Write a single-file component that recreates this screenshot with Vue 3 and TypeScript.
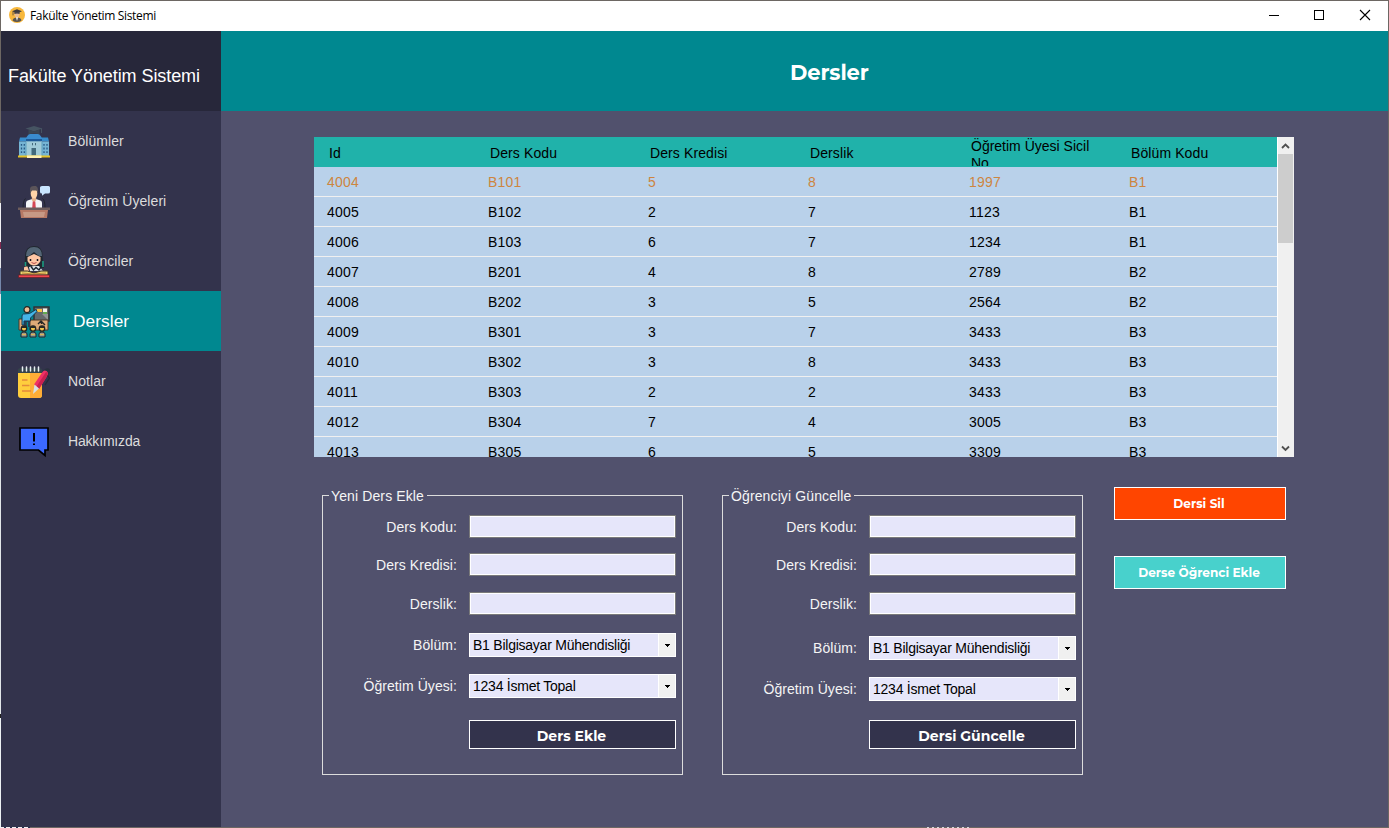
<script setup lang="ts">
import { ref } from 'vue'

interface NavItem { id: string; label: string }
interface Field { label: string; kind: 'text' | 'select'; value: string }
interface FormGroup { id: string; title: string; action: string; fields: Field[] }

const navItems: NavItem[] = [
  { id: 'departments', label: 'Bölümler' },
  { id: 'teachers', label: 'Öğretim Üyeleri' },
  { id: 'students', label: 'Öğrenciler' },
  { id: 'courses', label: 'Dersler' },
  { id: 'grades', label: 'Notlar' },
  { id: 'about', label: 'Hakkımızda' },
]
const current = ref('courses')
const selected = ref(0)

const columns: string[] = ['Id', 'Ders Kodu', 'Ders Kredisi', 'Derslik', 'Öğretim Üyesi Sicil No', 'Bölüm Kodu']
const rows: string[][] = [
  ['4004', 'B101', '5', '8', '1997', 'B1'],
  ['4005', 'B102', '2', '7', '1123', 'B1'],
  ['4006', 'B103', '6', '7', '1234', 'B1'],
  ['4007', 'B201', '4', '8', '2789', 'B2'],
  ['4008', 'B202', '3', '5', '2564', 'B2'],
  ['4009', 'B301', '3', '7', '3433', 'B3'],
  ['4010', 'B302', '3', '8', '3433', 'B3'],
  ['4011', 'B303', '2', '2', '3433', 'B3'],
  ['4012', 'B304', '7', '4', '3005', 'B3'],
  ['4013', 'B305', '6', '5', '3309', 'B3'],
]

const makeFields = (): Field[] => [
  { label: 'Ders Kodu:', kind: 'text', value: '' },
  { label: 'Ders Kredisi:', kind: 'text', value: '' },
  { label: 'Derslik:', kind: 'text', value: '' },
  { label: 'Bölüm:', kind: 'select', value: 'B1 Bilgisayar Mühendisliği' },
  { label: 'Öğretim Üyesi:', kind: 'select', value: '1234 İsmet Topal' },
]
const groups = ref<FormGroup[]>([
  { id: 'add', title: 'Yeni Ders Ekle', action: 'Ders Ekle', fields: makeFields() },
  { id: 'update', title: 'Öğrenciyi Güncelle', action: 'Dersi Güncelle', fields: makeFields() },
])
</script>

<template>
  <div class="window">
    <header class="titlebar">
      <svg class="app-icon" viewBox="0 0 16 16">
        <circle cx="8" cy="8" r="8" fill="#f8b83c" />
        <path d="M3.5 13.5Q4 10.5 8 10.5T12.5 13.5Q10.5 15 8 15T3.5 13.5Z" fill="#5a5550" />
        <path d="M6.8 10H9.2L8 14Z" fill="#f3f0ec" />
        <ellipse cx="8" cy="7.6" rx="2.4" ry="3" fill="#e9bd94" />
        <path d="M3 4.3L8 2.3L13 4.3L8 6.2Z" fill="#3d3b3e" />
        <path d="M5.4 5H10.6V7Q8 5.8 5.4 7Z" fill="#47434a" />
        <path d="M4 4.7V8.4" stroke="#47434a" stroke-width=".8" />
      </svg>
      <span class="app-name">Fakülte Yönetim Sistemi</span>
      <svg class="controls" viewBox="0 0 138 30" shape-rendering="crispEdges">
        <path d="M19 14.5H29" stroke="#000" />
        <rect x="64.500" y="9.500" width="9" height="9" fill="none" stroke="#000" />
        <path d="M110 9L120 19M120 9L110 19" stroke="#000" stroke-width="1.100" shape-rendering="auto" />
      </svg>
    </header>

    <div class="body">
      <aside class="sidebar">
        <div class="brand"><span>Fakülte Yönetim Sistemi</span></div>
        <nav>
          <a v-for="item in navItems" :key="item.id" class="nav-item" :class="[item.id, { active: item.id === current }]" @click="current = item.id">
            <svg v-if="item.id === 'departments'" class="icon" viewBox="0 0 32 32">
              <path d="M2 11.500H8V13H24V11.500H30L31 15.500H1Z" fill="#368bcb" />
              <path d="M11 8H21L25 13H7Z" fill="#3a8cce" />
              <path d="M7.500 2.400L16 0L24.500 2.400L16 5.500Z" fill="#465462" />
              <path d="M10.500 3.500L16 5.500L21.500 3.500V8.500Q16 6.500 10.500 8.500Z" fill="#3a4653" />
              <path d="M23.500 2.500V7" stroke="#465462" />
              <path d="M8 13H24V15.500H8Z" fill="#1d5997" />
              <rect x="1" y="15.500" width="30" height="14.500" fill="#76b5d4" />
              <path d="M8 15.500H24V30H8Z" fill="#a0cbd8" />
              <path d="M8 16V30M24 16V30" stroke="#5c9fbd" />
              <path d="M3.500 18V27M6.300 18V27M26 18V27M29 18V27" stroke="#285a85" stroke-width="1.300" stroke-dasharray="1.800 1.800" />
              <rect x="13.500" y="22" width="4.500" height="7.500" fill="#426a7c" />
              <path d="M14.500 17V19.300M17.500 17V19.300" stroke="#426a7c" />
              <rect y="29.500" width="32" height="2" fill="#e5c326" />
              <rect x="9" y="29.500" width="14.500" height="2.500" fill="#fff0b0" />
            </svg>
            <svg v-else-if="item.id === 'teachers'" class="icon" viewBox="0 0 32 32">
              <path d="M8 23V17Q8 14.500 11 14L16 12.500L21 14Q24 14.500 24 17V23Z" fill="#f3f5f7" />
              <path d="M13.800 10H18.200V14L16 17L13.800 14Z" fill="#e6b18a" />
              <path d="M14.700 15.500H17.300L17.800 22H14.200Z" fill="#d54755" />
              <ellipse cx="16" cy="7.500" rx="3.300" ry="5" fill="#ffd3a8" />
              <path d="M12 7.500V3Q12 0 16 0H18Q20 1 20 4V7.500L18.800 4.500H14Z" fill="#5b5459" />
              <path d="M22 1.500Q22 0 24 0H30.500Q32 0 32 1.500V6Q32 7.500 30 7.500H27L24 9.700V7.500Q22 7.500 22 6Z" fill="#c9e5ff" />
              <path d="M7.500 12.500Q5 15 5 22M24.500 12.500Q27 14 27 22" fill="none" stroke="#20242e" />
              <rect y="21.500" width="32" height="2.500" fill="#6d5d5c" />
              <path d="M2 24H30L29 32H3Z" fill="#b67965" />
              <path d="M5 26H27L26 31H6Z" fill="#c69985" />
            </svg>
            <svg v-else-if="item.id === 'students'" class="icon" viewBox="0 0 32 32">
              <path d="M7 11Q7 0 16 0T24.500 11L26 22H6.500Z" fill="#20272f" />
              <path d="M8 10Q8 1 16 1T24 10L21 10L16 6L11 10Z" fill="#536575" />
              <path d="M9.500 11L16 8L22.500 11V15Q20 19.500 16 19.500T9.500 15Z" fill="#ffc7a4" />
              <path d="M12.500 13V15M19.500 13V15" stroke="#171820" stroke-width="1.500" />
              <path d="M13.500 16.500Q16 18.500 18.500 16.500" stroke="#b64f4d" fill="none" />
              <path d="M7.500 16V20M25 15V21" stroke="#1c9c82" stroke-width="1.600" />
              <path d="M6 25V21.500Q7 20 9.500 20.500L11 25Z" fill="#ffc6a0" />
              <path d="M11 21L16 20L21 20L25 25H12Z" fill="#dfe6ec" />
              <path d="M13 20.500L15.500 24L18 21.500L21 24L23 21" fill="none" stroke="#17242e" stroke-width="1.400" />
              <path d="M2 25Q10 24 16 27Q23 24 30 25V29H2Z" fill="#e8d76e" stroke="#3d3026" />
              <path d="M4 27L15 28L28 27" stroke="#c0863e" fill="none" />
              <path d="M.500 29H31.500V31.500H.500Z" fill="#ed484e" stroke="#661b25" stroke-width=".7" />
            </svg>
            <svg v-else-if="item.id === 'courses'" class="icon" viewBox="0 0 32 32">
              <rect x="16" y="1" width="15" height="14" fill="#65696b" stroke="#303234" stroke-width="1.500" />
              <path d="M17 2L24 8H30V14L24 8Z" fill="#909494" />
              <rect x="19" y="3" width="5" height="3" fill="#f5bd43" />
              <rect x="25" y="2.500" width="4" height="3.500" fill="#f1f4ec" />
              <rect x="25" y="6" width="4" height="2" fill="#63ab4e" />
              <path d="M1 13H8V24H1ZM12 14H30V24H12Z" fill="#dfaa78" stroke="#4a3929" />
              <path d="M6 14H12V21H10V16H8.500V21H6Z" fill="#273f55" />
              <path d="M5.500 8L11.500 7.500L18 3.500L19 5.500L12.500 12V15H6V19H4V10Q4 8.500 5.500 8Z" fill="#45b4e6" stroke="#173b50" />
              <circle cx="9" cy="3.700" r="3" fill="#f1bd92" stroke="#282522" stroke-width="1.200" />
              <path d="M20 18L23 15L27 19M23.500 15V18" fill="none" stroke="#272725" stroke-width="1.400" />
              <g v-for="x in [6, 15, 24]" :key="x">
                <path :d="`M${x - 3} 31V28Q${x - 3} 26 ${x} 26T${x + 3} 28V31Z`" fill="#89949a" stroke="#25282a" />
                <circle :cx="x" cy="22.500" r="2.700" fill="#f1c54d" stroke="#252524" stroke-width="1.300" />
                <path :d="`M${x - 2.500} 22Q${x} 17.500 ${x + 2.500} 22`" fill="#282725" />
                <path :d="`M${x - 2} 28.500H${x + 2}`" stroke="#ddb354" stroke-width="1.500" />
              </g>
            </svg>
            <svg v-else-if="item.id === 'grades'" class="icon" viewBox="0 0 32 32">
              <path d="M0 7H24V29Q24 32 21 32H3Q0 32 0 29Z" fill="#ffce3d" />
              <path d="M12 7H24V29Q24 32 21 32H12Z" fill="#ffad36" />
              <path d="M0 7V4Q0 2 3 2H21Q24 2 24 4V7Z" fill="#35444c" />
              <path d="M4.500 1V5M8.500 1V5M12.500 1V5M16.500 1V5M20.500 1V5" stroke="#e9eff3" stroke-width="1.500" stroke-linecap="round" />
              <path d="M4 14H9.500M4 19.500H11.500M4 25H13" stroke="#e48b3b" stroke-width="1.500" />
              <path d="M26 4Q28 1.500 31 2.500Q33 4 31 8L29.500 9.500L25 6Z" fill="#29313f" />
              <path d="M16 18.500L24.500 6Q26 3.500 28.500 5Q31 7 29.500 9.500L21 23Z" fill="#ef3066" />
              <path d="M18.500 20.500L28 6Q30.500 7 29.500 9.500L21 23Z" fill="#c9204f" />
              <path d="M16.500 18.500L21 22.500L15 28Z" fill="#d9dfe4" />
              <path d="M29.500 9.500L31.500 12L27 19" fill="none" stroke="#242b38" stroke-width="1.300" />
            </svg>
            <svg v-else class="icon" viewBox="0 0 32 32">
              <path d="M2 2H30V24H27V29.500L20.500 24H2Z" fill="#3b69ff" stroke="#000" stroke-width="1.700" />
              <path d="M16 7V15.500M16 17.500V19" stroke="#000" stroke-width="2" />
            </svg>
            <span>{{ item.label }}</span>
          </a>
        </nav>
      </aside>

      <section class="page">
        <div class="page-header"><h1>Dersler</h1></div>
        <main>
          <div class="table-box">
            <div class="table">
              <div class="row head">
                <div v-for="column in columns" :key="column" class="cell"><span>{{ column }}</span></div>
              </div>
              <div v-for="(row, index) in rows" :key="row[0]" class="row" :class="{ selected: index === selected }" @click="selected = index">
                <div v-for="(cell, c) in row" :key="c" class="cell">{{ cell }}</div>
              </div>
            </div>
            <div class="scrollbar">
              <svg viewBox="0 0 16 17"><path d="M4 11L7.500 7.500L11 11" fill="none" stroke="#505050" stroke-width="1.800" /></svg>
              <div class="thumb"></div>
              <svg viewBox="0 0 16 17"><path d="M4 6.500L7.500 10L11 6.500" fill="none" stroke="#505050" stroke-width="1.800" /></svg>
            </div>
          </div>

          <div class="lower">
            <fieldset v-for="group in groups" :key="group.id" :class="group.id">
              <legend>{{ group.title }}</legend>
              <div class="form">
                <label v-for="field in group.fields" :key="field.label" class="field" :class="field.kind">
                  <span class="caption">{{ field.label }}</span>
                  <input v-if="field.kind === 'text'" v-model="field.value" type="text" />
                  <span v-else class="combo">
                    <span class="value">{{ field.value }}</span>
                    <span class="arrow"><svg viewBox="0 0 5 3" shape-rendering="crispEdges"><path d="M0 0H5V1H4V2H3V3H2V2H1V1H0Z" /></svg></span>
                  </span>
                </label>
                <button type="button" class="submit">{{ group.action }}</button>
              </div>
            </fieldset>
            <div class="actions">
              <button type="button" class="delete">Dersi Sil</button>
              <button type="button" class="enroll">Derse Öğrenci Ekle</button>
            </div>
          </div>
        </main>
      </section>
    </div>
  </div>
</template>

<style>
body { margin: 0; overflow: hidden; }
</style>

<style scoped>
* { box-sizing: border-box; }
.window {
  width: 1389px; height: 828px; padding: 1px; display: flex; flex-direction: column;
  background:
    linear-gradient(#6d6763 0 203px, #f1f2f5 203px 242px, #80284f 242px 249px, #e6e8ec 249px 268px, #7687aa 268px 294px, #e2e6e9 294px 714px, #222 714px 718px, #edf2f4 718px 828px) 0 0 / 1px 100% no-repeat,
    repeating-linear-gradient(90deg, #f1eef0 0 4px, #24304f 4px 6px) 0 100% / 30px 1px no-repeat,
    repeating-linear-gradient(90deg, #6d6763 0 3px, #d8d8dc 3px 5px) 924px 100% / 48px 1px no-repeat,
    #6d6763;
  font: 14px/17px "Liberation Sans", Arial, sans-serif;
}
.titlebar { height: 30px; flex: none; background: #fff; display: flex; align-items: center; padding-left: 8px; }
.app-icon { width: 16px; height: 16px; margin: -2px 5px 0 0; }
.app-name { font: 12px/16px "Open Sans", "Noto Sans", sans-serif; color: #000; letter-spacing: -.34px; }
.controls { width: 138px; height: 30px; margin-left: auto; }
.body { flex: 1; display: flex; min-height: 0; }
.sidebar { width: 220px; background: #33334c; flex: none; }
.brand { height: 80px; background: #27273a; color: #fff; font-size: 18px; letter-spacing: -.08px; padding: 10px 0 0 7px; display: flex; align-items: center; white-space: nowrap; }
.nav-item { height: 60px; display: flex; align-items: center; padding-left: 17px; color: #dcdcdc; letter-spacing: .07px; }
.nav-item.about { letter-spacing: -.18px; }
.nav-item.active { background: #008890; color: #fff; font-size: 17.300px; }
.icon { width: 32px; height: 32px; margin: 2px 18px 0 0; }
.active .icon { margin-right: 23px; }
.page { flex: 1; background: #51516d; display: flex; flex-direction: column; }
.page-header { height: 80px; background: #008890; padding: 4px 0 0 569px; display: flex; align-items: center; }
h1 { margin: 0; font: 700 21px/26px Montserrat, Inter, sans-serif; letter-spacing: -.1px; color: #fff; }
main { padding: 26px 0 0 93px; }
.table-box { width: 980px; height: 320px; display: flex; }
.table { flex: 1; overflow: hidden; background: #b9d1ea; }
.row { height: 30px; display: grid; grid-template-columns: 161px 160px 160px 161px 160px 161px; border-bottom: 1px solid #f0f0f0; color: #000; background: #b9d1ea; }
.row.selected { color: #cd853f; }
.row.head { background: #20b2aa; border: 0; }
.cell { padding: 1px 0 0 13px; display: flex; align-items: center; letter-spacing: .2px; }
.head .cell { padding: 7px 20px 0 15px; letter-spacing: .1px; height: 29px; line-height: 18px; align-items: flex-start; overflow: hidden; }
.head .cell:nth-child(5) { padding-top: 1px; line-height: 17px; letter-spacing: 0; }
.scrollbar { width: 17px; border-left: 1px solid #fff; background: #f0f0f0; display: flex; flex-direction: column; }
.scrollbar svg { width: 16px; height: 17px; flex: none; }
.scrollbar svg:last-child { margin-top: auto; }
.thumb { height: 89px; width: 15px; background: #cdcdcd; }
.lower { display: flex; padding: 30px 0 0 8px; align-items: flex-start; }
fieldset { width: 361px; height: 288px; margin: 0 39px 0 0; padding: 0; border: 1px solid #dcdcdc; min-width: 0; color: #f5f5f5; }
fieldset.update { margin-right: 31px; }
legend { height: 17px; margin-left: 6px; padding: 1px 3px 0 2px; line-height: 17px; letter-spacing: .12px; }
.form { padding-top: 11px; display: flex; flex-direction: column; }
.field { display: flex; height: 23px; margin-bottom: 15px; }
.field:nth-child(2) { margin-bottom: 16px; }
.field:nth-child(3) { margin-bottom: 18px; }
.field.select { height: 24px; margin-bottom: 17px; }
.field:nth-child(5) { margin-bottom: 22px; }
.update .field:nth-child(3) { margin-bottom: 21px; }
.update .field:nth-child(5) { margin-bottom: 19px; }
.caption { width: 134px; margin-right: 12px; text-align: right; padding-top: 4px; letter-spacing: .07px; }
input { width: 207px; height: 23px; padding: 0 3px; border: 1px solid #7a7a7a; outline: 1px solid #fff; outline-offset: -2px; background: #e6e6fa; border-radius: 0; font: inherit; }
.combo { width: 207px; border: 1px solid #fff; background: #e6e6fa; display: flex; color: #000; }
.value { flex: 1; padding: 3px 0 0 3px; white-space: nowrap; letter-spacing: -.24px; }
.arrow { width: 17px; border-left: 1px solid #fff; background: #f0f0f0; display: flex; align-items: center; justify-content: center; }
.arrow svg { width: 5px; height: 3px; margin-left: 1px; }
button { border: 1px solid #fff; border-radius: 0; color: #fff; padding: 0; font: 700 14px/18px Montserrat, Inter, sans-serif; }
.submit { width: 207px; height: 29px; margin-left: 146px; background: #33334c; padding: 2px 2px 0 0; }
.actions { display: flex; flex-direction: column; gap: 36px; }
.actions button { width: 172px; height: 33px; font-size: 12.100px; padding-right: 2px; }
.delete { background: #ff4500; }
.enroll { background: #48d1cc; }
</style>
